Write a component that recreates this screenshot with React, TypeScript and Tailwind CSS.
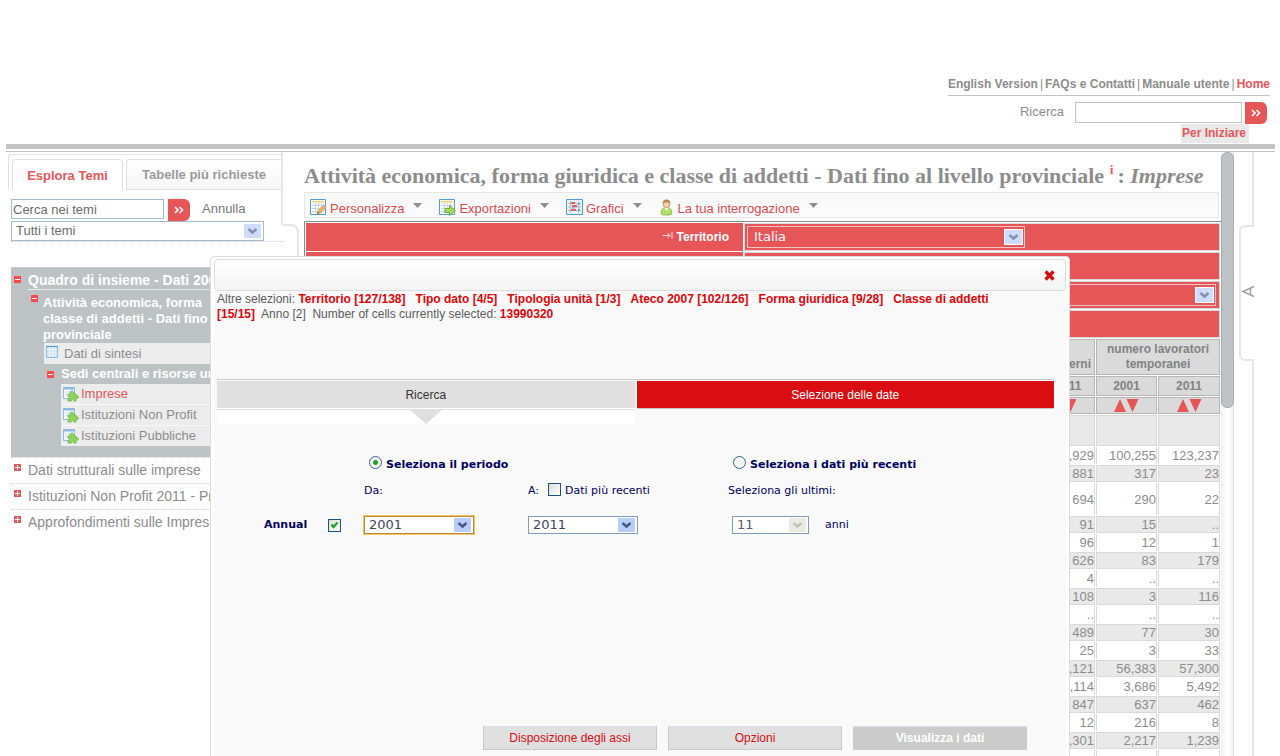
import { useState, type ReactNode } from "react";
import { clsx } from "clsx";

type Row = { cells: [string, string, string]; tall?: boolean };

const ROWS: Row[] = [
	{ cells: [",929", "100,255", "123,237"] },
	{ cells: ["881", "317", "23"] },
	{ cells: ["694", "290", "22"], tall: true },
	{ cells: ["91", "15", ".."] },
	{ cells: ["96", "12", "1"] },
	{ cells: ["626", "83", "179"] },
	{ cells: ["4", "..", ".."] },
	{ cells: ["108", "3", "116"] },
	{ cells: ["..", "..", ".."] },
	{ cells: ["489", "77", "30"] },
	{ cells: ["25", "3", "33"] },
	{ cells: [",121", "56,383", "57,300"] },
	{ cells: [",114", "3,686", "5,492"] },
	{ cells: ["847", "637", "462"] },
	{ cells: ["12", "216", "8"] },
	{ cells: [",301", "2,217", "1,239"] },
	{ cells: ["", "", ""] },
];

const SELECTIONS = [
	"Territorio [127/138]",
	"Tipo dato [4/5]",
	"Tipologia unità [1/3]",
	"Ateco 2007 [102/126]",
	"Forma giuridica [9/28]",
	"Classe di addetti [15/15]",
];

export default function App() {
	return (
		<div className="relative h-screen overflow-hidden bg-white font-['Liberation_Sans',Arial,sans-serif] text-[13px] text-[#8c8c8c]">
			<Header />

			<div className="flex h-full pr-[26px] pl-[6px]">
				<Sidebar />

				<div className="mr-[5px] flex w-4 shrink-0 flex-col">
					<div className="mt-[72px] grow rounded-tr-lg border-t-2 border-r-2 border-[#e6e6e6]" />
				</div>

				<Main />

				<div className="mr-[5px] w-[13px] shrink-0 border-r border-[#dedede] bg-linear-to-r from-[#f2f2f2] via-white to-[#f5f5f5]">
					<div className="h-64 w-[13px] rounded-md border border-[#a9aeb1] bg-[#bdc2c5]" />
				</div>

				<div className="flex w-[15px] shrink-0 flex-col">
					<div className="h-[73px] border-r-2 border-[#e6e6e6]" />
					<button
						type="button"
						aria-label="Apri pannello"
						className="flex h-[136px] items-center justify-end rounded-l-md border-y-2 border-l-2 border-[#e6e6e6] pb-1"
					>
						<svg width="13" height="13" viewBox="0 0 13 13">
							<path
								d="M13 1.500 2 6.500l11 5M9.500 3.500v6"
								fill="none"
								stroke="#9f9f9f"
								strokeWidth="1.500"
							/>
						</svg>
					</button>
					<div className="grow border-r-2 border-[#e6e6e6]" />
				</div>
			</div>

			<Dialog />
		</div>
	);
}

function Header() {
	return (
		<header className="pr-[5px] pl-[6px]">
			<div className="flex h-36 flex-col items-end pt-[76px]">
				<nav className="mr-[5px] flex h-5 gap-[2px] border-b border-[#c3c3c3] text-xs font-bold whitespace-nowrap">
					<a href="#en">English Version</a>
					<span className="font-normal">|</span>
					<a href="#faq">FAQs e Contatti</a>
					<span className="font-normal">|</span>
					<a href="#manuale">Manuale utente</a>
					<span className="font-normal">|</span>
					<a href="#home" className="text-[#e65558]">
						Home
					</a>
				</nav>

				<form className="mt-[6px] mr-2 flex h-[22px] items-start">
					<label htmlFor="ricerca" className="mr-[11px]">
						Ricerca
					</label>
					<input
						id="ricerca"
						className="mr-[3px] h-[21px] w-[167px] border border-[#c3c3c3] px-1 outline-none"
					/>
					<GoButton label="Cerca" />
				</form>

				<a
					href="#start"
					className="mr-[26px] h-[19px] bg-[#e9e9e9] pr-[3px] pl-[1px] text-xs leading-[19px] font-bold text-[#e65558]"
				>
					Per Iniziare
				</a>
			</div>
			<div className="h-2 border-t-[5px] border-b border-[#c3c3c3]" />
		</header>
	);
}

function GoButton({ label }: { label: string }) {
	return (
		<button
			type="button"
			aria-label={label}
			className="flex size-[22px] shrink-0 items-center justify-center rounded-r-md bg-[#e65558]"
		>
			<svg width="10" height="8" viewBox="0 0 10 8">
				<path
					d="m1 1 3 3-3 3M5.500 1l3 3-3 3"
					fill="none"
					stroke="#fff"
					strokeWidth="1.600"
				/>
			</svg>
		</button>
	);
}

function Sidebar() {
	return (
		<aside className="w-[277px] shrink-0 overflow-hidden">
			<div className="h-[73px] border-r-2 border-[#e6e6e6] pt-[2px] pl-[2px]">
				<div className="flex h-[36px] gap-[3px] rounded-tl border-t border-l border-[#e0e0e0] pt-1 pl-[3px] text-[13px] font-bold">
					<button
						type="button"
						className="h-[32px] w-[111px] rounded-t-sm border border-b-0 border-[#dedede] text-[#e65558]"
					>
						Esplora Temi
					</button>
					<button
						type="button"
						className="h-[31px] grow rounded-tl-sm border border-r-0 border-[#dedede] bg-linear-to-b from-white to-[#f6f6f6] text-[#9b9b9b]"
					>
						Tabelle più richieste
					</button>
				</div>

				<form className="mt-[9px] ml-[3px] flex">
					<input
						aria-label="Cerca nei temi"
						defaultValue="Cerca nei temi"
						className="mr-1 h-5 w-[153px] border border-[#a5bacd] px-px text-[#6b6b6b] outline-none"
					/>
					<GoButton label="Cerca nei temi" />
					<a href="#annulla" className="ml-3 text-[#777]">
						Annulla
					</a>
				</form>
			</div>

			<div className="-mt-1 ml-[5px] border-b border-dotted border-[#cfcfcf]">
				<SelectBox
					label="Temi"
					options={["Tutti i temi"]}
					box="h-5 w-[253px] border-[#a5bacd] bg-white"
					text="text-[#6b6b6b]"
					faded
				/>
			</div>

			<ThemeTree />
		</aside>
	);
}

function Expander({ open }: { open?: boolean }) {
	return (
		<svg width="7" height="7" viewBox="0 0 7 7" className="shrink-0">
			<path d="M0 0h7v7H0z" fill={open ? "#fb4a4d" : "#e65558"} />
			<path
				d={open ? "M1 3.500h5" : "M1 3.500h5M3.500 1v5"}
				stroke="#fff"
				strokeWidth="1"
			/>
		</svg>
	);
}

function ThemeTree() {
	return (
		<ul className="mt-[25px] ml-[5px] text-[13px] whitespace-nowrap">
			<li className="h-[190px] border-t border-dotted border-[#cfcfcf] bg-[#bdc2c5] pl-[3px] font-bold text-white">
				<div className="flex h-[22px] items-start gap-[7px] pt-2">
					<Expander open />
					<span className="-mt-1 h-[18px] grow border-b border-[#e8e8e8] text-sm leading-4">
						Quadro di insieme - Dati 2001
					</span>
				</div>

				<div className="mt-[3px] ml-[17px] flex gap-[5px] pt-[2px]">
					<Expander open />
					<span className="leading-4">
						Attività economica, forma
						<br />
						classe di addetti - Dati fino
						<br />
						provinciale
					</span>
				</div>

				<a
					href="#sintesi"
					className="ml-[30px] flex h-[21px] items-center gap-[6px] bg-[#ececec] pl-[2px] font-normal text-[#8c8c8c]"
				>
					<svg width="12" height="12" viewBox="0 0 12 12" className="mb-1">
						<path d="M.5.5h11v11H.5z" fill="#cfe4fa" stroke="#8bbbe8" />
						<path d="M0 .5h12" stroke="#4f93d2" />
						<path
							d="M3.500 1v10M6.500 1v10M9.500 1v10M1 3.500h10M1 6.500h10M1 9.500h10"
							stroke="#fff"
							strokeWidth=".5"
						/>
					</svg>
					Dati di sintesi
				</a>

				<div className="ml-[33px] flex h-5 items-center gap-[7px]">
					<Expander open />
					Sedi centrali e risorse umane
				</div>

				<div className="ml-[47px] flex flex-col gap-px bg-[#f8f8f8] font-normal">
					<TreeLeaf active>Imprese</TreeLeaf>
					<TreeLeaf>Istituzioni Non Profit</TreeLeaf>
					<TreeLeaf>Istituzioni Pubbliche</TreeLeaf>
				</div>
			</li>

			<TreeRoot>Dati strutturali sulle imprese</TreeRoot>
			<TreeRoot>Istituzioni Non Profit 2011 - Primi risultati</TreeRoot>
			<TreeRoot>Approfondimenti sulle Imprese</TreeRoot>
		</ul>
	);
}

function TreeRoot({ children }: { children: ReactNode }) {
	return (
		<li className="flex h-[26px] items-center gap-[7px] border-t border-dotted border-[#cfcfcf] pb-[2px] pl-[3px] text-sm">
			<span className="mb-1">
				<Expander />
			</span>
			<a href="#tema">{children}</a>
		</li>
	);
}

function TreeLeaf({
	children,
	active,
}: {
	children: ReactNode;
	active?: boolean;
}) {
	return (
		<a
			href="#dataset"
			className={clsx(
				"flex h-5 items-center gap-[2px] bg-[#ececec] pl-[2px]",
				active ? "text-[#e65558]" : "text-[#8c8c8c]",
			)}
		>
			<svg width="16" height="16" viewBox="0 0 16 16">
				<path d="M.5 1.500h11v11H.5z" fill="#f1f7fd" stroke="#8db9e3" />
				<path d="M1 2h10v1.500H1z" fill="#8db9e3" />
				<path
					d="M2.500 6h1M2.500 8.500h1M5 6h5M5 8.500h3"
					stroke="#9fc4e8"
					strokeWidth="1"
				/>
				<path
					d="M5 8h2.500C7 6 8 5 9 5s2 1 1.500 3H13v2c1.500-.5 2.500 0 2.500 1s-1 1.500-2.500 1.200V15h-2.500c.2-1.200-.3-1.800-1-1.800s-1.300.6-1 1.800H5v-2.500c1 .2 1.600-.2 1.600-1S6 10.300 5 10.500z"
					fill="#8fd45a"
					stroke="#6fb84a"
					strokeWidth=".8"
				/>
			</svg>
			{children}
		</a>
	);
}

function Main() {
	return (
		<main className="min-w-0 grow overflow-hidden">
			<h1 className="flex h-10 items-center pt-[7px] font-['Liberation_Serif',Georgia,serif] text-[22px] font-bold whitespace-nowrap">
				Attività economica, forma giuridica e classe di addetti - Dati fino al
				livello provinciale
				<a href="#info" className="mr-1 ml-[6px] pb-3 text-xs text-[#fb4a4d]">
					i
				</a>
				<span>
					: <i>Imprese</i>
				</span>
			</h1>

			<div className="mr-[2px] flex h-[26px] gap-[17px] border border-[#e6e6e6] bg-linear-to-b from-[#f8f8f8] to-[#fcfcfc] pl-[5px] text-[#dc4a4d]">
				<ToolbarItem label="Personalizza" icon={<GridIcon kind="edit" />} />
				<ToolbarItem label="Exportazioni" icon={<GridIcon kind="export" />} />
				<ToolbarItem label="Grafici" icon={<ChartIcon />} />
				<ToolbarItem label="La tua interrogazione" icon={<UserIcon />} />
			</div>

			<div className="mt-[3px] flex flex-col gap-px border-t border-l border-[#8c8c8c] pt-px pr-px pl-px">
				<FilterRow label="Territorio">
					<SelectBox
						label="Territorio"
						options={["Italia"]}
						box="h-[22px] w-[278px] border-[#eec5c5] bg-[#e65558]"
						text="font-['DejaVu_Sans',Verdana,sans-serif] text-white pl-[6px]"
						faded
					/>
				</FilterRow>
				<FilterRow />
				<FilterRow>
					<SelectBox
						label="Tipo dato"
						options={[""]}
						box="h-[22px] w-full border-[#eec5c5] bg-[#e65558]"
						text="text-white pl-1"
						faded
					/>
				</FilterRow>
				<FilterRow />
			</div>

			<DataTable />
		</main>
	);
}

function FilterRow({
	label,
	children,
}: {
	label?: string;
	children?: ReactNode;
}) {
	return (
		<div className="flex h-7 gap-px">
			<div className="flex w-[437px] shrink-0 items-center justify-end gap-1 bg-[#e65558] pr-[14px] text-xs font-bold text-white">
				{label && (
					<>
						<svg width="10" height="7" viewBox="0 0 10 7" className="mb-1">
							<path
								d="M0 3.500h7M4.500 1 7 3.500 4.500 6M9 0v7"
								fill="none"
								stroke="#fbe3e3"
								strokeWidth="1"
							/>
						</svg>
						{label}
					</>
				)}
			</div>
			<div className="flex grow items-center border border-[#d9d9d9] bg-[#e65558] pr-[3px] pl-[2px]">
				{children}
			</div>
		</div>
	);
}

function ToolbarItem({ icon, label }: { icon: ReactNode; label: string }) {
	return (
		<button type="button" className="flex h-full items-center">
			{icon}
			<span className="mt-2 mr-[9px] ml-[3px]">{label}</span>
			<svg width="9" height="5" viewBox="0 0 9 5">
				<path d="M0 0h9L4.500 5z" fill="#8f8f8f" />
			</svg>
		</button>
	);
}

function GridIcon({ kind }: { kind: "edit" | "export" }) {
	return (
		<svg width="17" height="17" viewBox="0 0 17 17" className="mt-1">
			<path d="M.5.5h15v15H.5z" fill="#fff" stroke="#4b9fd5" />
			<path d="M2 2h12v1.500H2z" fill="#f7cf6c" />
			<path
				d="M2 6.500h12M2 9.500h12M2 12.500h12M5.500 4v10M8.500 4v10M11.500 4v10"
				stroke="#c3d9ea"
				strokeWidth="1"
			/>
			{kind === "edit" ? (
				<>
					<path
						d="m7 15 1-3.500L13.500 6 16 8.500 10.500 14z"
						fill="#f5b155"
						stroke="#d1914a"
						strokeWidth=".6"
					/>
					<path d="m12.500 7 1.500-1.500 2.500 2.500L15 9.500z" fill="#d9a8b5" />
					<path d="m7 15 .8-2.500 1.700 1.700z" fill="#777" />
				</>
			) : (
				<path
					d="M6 9.500h4.500V6.500L16.500 11.500l-6 5v-3H6z"
					fill="#a4da58"
					stroke="#6aa83a"
					strokeWidth=".9"
				/>
			)}
		</svg>
	);
}

function ChartIcon() {
	return (
		<svg width="17" height="17" viewBox="0 0 17 17" className="mt-1">
			<path d="M.5.5h16v15H.5z" fill="#e9f3fa" stroke="#4b9fd5" />
			<path
				d="M4.500 2v12M12.500 2v12M2 4.500h13M2 8h13M2 11.500h13"
				stroke="#a8c4d6"
				strokeWidth="1"
			/>
			<path d="M5 3h4v2H5zM6 6h5v2H6zM5 10h5v2H5z" fill="#ea5a5c" />
			<path d="M6 8.500h3v1H6zM12 4h2v2h-2zM12 10h2v2h-2z" fill="#6ea6cb" />
		</svg>
	);
}

function UserIcon() {
	return (
		<svg width="16" height="17" viewBox="0 0 16 17" className="mt-1">
			<path
				d="M2.500 15.500C1.500 12 3 9 5.500 9h4c2.500 0 4 3 3 6.500-2 .8-8 .8-10 0z"
				fill="#b3df66"
				stroke="#86b544"
				strokeWidth=".8"
			/>
			<path d="m5.500 9 2 3 2-3z" fill="#fff" />
			<circle
				cx="7.500"
				cy="5"
				r="3.600"
				fill="#f3d0a8"
				stroke="#b58a55"
				strokeWidth=".7"
			/>
			<path
				d="M3.800 5C3.500 2 5 .6 7.500.6s4 1.400 3.700 4.400C10 3.500 8.500 3.500 7.500 3.500S5 3.500 3.800 5z"
				fill="#b58a55"
			/>
		</svg>
	);
}

function DataTable() {
	return (
		<table className="ml-auto w-[188px] table-fixed border-separate border-spacing-px text-right">
			<colgroup>
				<col className="w-[61px]" />
				<col className="w-[61px]" />
				<col className="w-[62px]" />
			</colgroup>
			<thead className="text-center text-xs text-[#828282]">
				<tr className="h-9">
					<HeadCell className="pr-[3px] pb-[2px] text-right align-bottom leading-[15px]">
						esterni
					</HeadCell>
					<HeadCell colSpan={2} className="leading-[15px]">
						numero lavoratori
						<br />
						temporanei
					</HeadCell>
				</tr>
				<tr className="h-5">
					<HeadCell className="pl-2 leading-4">2011</HeadCell>
					<HeadCell className="leading-4">2001</HeadCell>
					<HeadCell className="leading-4">2011</HeadCell>
				</tr>
				<tr className="h-[17px]">
					{[0, 1, 2].map((n) => (
						<HeadCell key={n}>
							<button
								type="button"
								aria-label="Ordina"
								className="flex w-full justify-center"
							>
								<svg width="25" height="13" viewBox="0 0 25 13">
									<path d="M6 0l6 13H0zM12.500 0h12l-6 13z" fill="#e65558" />
								</svg>
							</button>
						</HeadCell>
					))}
				</tr>
			</thead>
			<tbody className="leading-[15px]">
				<tr className="h-[31px]">
					{[0, 1, 2].map((n) => (
						<td key={n} className="border border-[#d9d9d9] bg-[#e9e9e9] p-0" />
					))}
				</tr>
				{ROWS.map((row, i) => (
					<tr key={i} className={row.tall ? "h-8" : "h-[17px]"}>
						{row.cells.map((cell, j) => (
							<td
								key={j}
								className={clsx(
									"border-x border-[#d9d9d9] p-0",
									i % 2 === 1 && "border-y bg-[#e9e9e9]",
								)}
							>
								{cell}
							</td>
						))}
					</tr>
				))}
			</tbody>
		</table>
	);
}

function HeadCell({
	children,
	className = "p-0",
	colSpan,
}: {
	children?: ReactNode;
	className?: string;
	colSpan?: number;
}) {
	return (
		<th
			colSpan={colSpan}
			className={clsx("border border-[#b5b5b5] bg-[#dadada]", className)}
		>
			{children}
		</th>
	);
}

type SelectBoxProps = {
	label: string;
	options: string[];
	box: string;
	text: string;
	faded?: boolean;
	disabled?: boolean;
};

function SelectBox({
	label,
	options,
	box,
	text,
	faded,
	disabled,
}: SelectBoxProps) {
	return (
		<span className={clsx("grid grid-rows-1 items-center border", box)}>
			<select
				aria-label={label}
				disabled={disabled}
				className={clsx(
					"col-start-1 row-start-1 h-full w-full appearance-none pl-1 text-[13px] leading-4 outline-none",
					text,
				)}
			>
				{options.map((o) => (
					<option key={o}>{o}</option>
				))}
			</select>
			<svg
				width="19"
				height="16"
				viewBox="0 0 19 16"
				className="pointer-events-none col-start-1 row-start-1 mr-px justify-self-end"
			>
				<path d="M0 0h19v16H0z" fill="#fff" />
				<rect
					x="1"
					y="1"
					width="17"
					height="14"
					rx="1"
					fill={disabled ? "#ecebe3" : faded ? "#d0dcfb" : "#b9cdfb"}
				/>
				<path
					d="m5.500 6 4 3.500 4-3.500"
					fill="none"
					stroke={disabled ? "#c5c4ba" : faded ? "#8290ab" : "#47597f"}
					strokeWidth="2.500"
				/>
			</svg>
		</span>
	);
}

function Dialog() {
	const [mode, setMode] = useState<"period" | "recent">("period");

	return (
		<div className="absolute inset-x-0 top-64 flex justify-center">
			<section
				role="dialog"
				aria-label="Selezione delle date"
				className="w-[860px] rounded-sm border border-[#dcdcdc] bg-white px-[3px] pt-[2px]"
			>
				<div className="flex h-8 items-center justify-end rounded-sm border border-[#dcdcdc] bg-linear-to-b from-white to-[#f4f4f4] pr-[10px]">
					<button type="button" aria-label="Chiudi">
						<svg width="11" height="11" viewBox="0 0 11 11">
							<path
								d="m1.500 1.500 8 8M9.500 1.500l-8 8"
								stroke="#d00a0f"
								strokeWidth="3.200"
							/>
						</svg>
					</button>
				</div>

				<div className="bg-[#f9f9f9] pr-3 pb-10 pl-[3px]">
					<p className="h-[88px] max-w-[800px] pt-px text-xs leading-[15px] text-[#5c5c5c]">
						Altre selezioni:{" "}
						{SELECTIONS.map((s, i) => (
							<span key={s}>
								<b className="text-[#e00408]">{s}</b>
								{i < SELECTIONS.length - 1 ? "\u00a0\u00a0 " : "\u00a0 "}
							</span>
						))}
						Anno [2]&nbsp; Number of cells currently selected:{" "}
						<b className="text-[#e00408]">13990320</b>
					</p>

					<div className="flex gap-[2px] border-t border-[#c8c8c8] pt-px text-xs">
						<div className="flex-1 bg-white">
							<button
								type="button"
								className="h-7 w-full border-b border-white bg-[#e0e0e0] text-[#333]"
							>
								Ricerca
							</button>
							<div className="flex h-[15px] justify-center border-t border-[#e0e0e0]">
								<svg width="32" height="14" viewBox="0 0 32 14">
									<path d="M0 0h32L16 14z" fill="#e0e0e0" />
								</svg>
							</div>
						</div>
						<div className="flex-1">
							<button
								type="button"
								className="h-[27px] w-full bg-[#d90d12] text-white"
							>
								Selezione delle date
							</button>
							<div className="border-t border-[#c8c8c8]" />
						</div>
					</div>

					<form className="mt-[31px] grid grid-cols-[64px_36px_164px_200px_1fr] items-center pl-[47px] font-['DejaVu_Sans',Verdana,sans-serif] text-[11px] text-[#000060]">
						<Radio
							label="Seleziona il periodo"
							checked={mode === "period"}
							onChange={() => setMode("period")}
							className="col-span-2 col-start-3"
						/>
						<Radio
							label="Seleziona i dati più recenti"
							checked={mode === "recent"}
							onChange={() => setMode("recent")}
						/>

						<span className="col-start-3 mt-2">Da:</span>
						<label className="mt-2 flex items-center">
							A:
							<span className="mr-1 mb-1 ml-[9px] flex">
								<CheckBox />
							</span>
							Dati più recenti
						</label>
						<span className="mt-2">Seleziona gli ultimi:</span>

						<label htmlFor="annual" className="mt-4 font-bold">
							Annual
						</label>
						<span className="mt-4">
							<CheckBox id="annual" defaultChecked />
						</span>
						<span className="mt-4 flex">
							<SelectBox
								label="Da"
								options={["2001"]}
								box="h-[18px] w-[110px] border-[#b8892f] bg-white ring-1 ring-[#f3c766]"
								text="text-[#43435f]"
							/>
						</span>
						<span className="mt-4 flex">
							<SelectBox
								label="A"
								options={["2011"]}
								box="h-[18px] w-[110px] border-[#7f9db9] bg-white"
								text="text-[#43435f]"
							/>
						</span>
						<span className="mt-4 flex items-center gap-4 pl-1">
							<SelectBox
								label="Seleziona gli ultimi"
								options={["11"]}
								box="h-[18px] w-[77px] border-[#7f9db9] bg-white"
								text="text-[#5a5a70]"
								disabled
							/>
							anni
						</span>
					</form>

					<div className="mt-48 flex justify-center gap-[11px] pl-[239px]">
						<DialogButton>Disposizione degli assi</DialogButton>
						<DialogButton>Opzioni</DialogButton>
						<DialogButton primary>Visualizza i dati</DialogButton>
					</div>
				</div>
			</section>
		</div>
	);
}

function Radio({
	label,
	checked,
	onChange,
	className,
}: {
	label: string;
	checked: boolean;
	onChange: () => void;
	className?: string;
}) {
	return (
		<label
			className={clsx(
				"flex h-5 items-center gap-1 pl-[5px] font-bold",
				className,
			)}
		>
			<input
				type="radio"
				name="mode"
				checked={checked}
				onChange={onChange}
				className="mb-[6px] size-[13px] appearance-none rounded-full border border-[#336090] bg-[#f4f4f0] checked:bg-[radial-gradient(circle,#21a121_0_2px,#f8f8f4_3px)]"
			/>
			{label}
		</label>
	);
}

function CheckBox({
	id,
	defaultChecked,
}: {
	id?: string;
	defaultChecked?: boolean;
}) {
	return (
		<span className="grid w-[13px]">
			<input
				id={id}
				type="checkbox"
				defaultChecked={defaultChecked}
				className="peer col-start-1 row-start-1 size-[13px] appearance-none border border-[#1c5180] bg-linear-to-br from-[#dcdcd7] to-white"
			/>
			<svg
				width="13"
				height="13"
				viewBox="0 0 13 13"
				className="pointer-events-none invisible col-start-1 row-start-1 peer-checked:visible"
			>
				<path
					d="m3.500 5.500 2 2.500 4-4.500"
					fill="none"
					stroke="#21a121"
					strokeWidth="2.200"
				/>
			</svg>
		</span>
	);
}

function DialogButton({
	children,
	primary,
}: {
	children: ReactNode;
	primary?: boolean;
}) {
	return (
		<button
			type="button"
			className={clsx(
				"h-6 w-[174px] border border-t-[#d5e1ec] text-xs",
				primary
					? "border-[#cbcbcb] bg-[#cbcbcb] font-bold text-white"
					: "border-[#c8c8c8] bg-[#e0e0e0] text-[#d90d12]",
			)}
		>
			{children}
		</button>
	);
}
